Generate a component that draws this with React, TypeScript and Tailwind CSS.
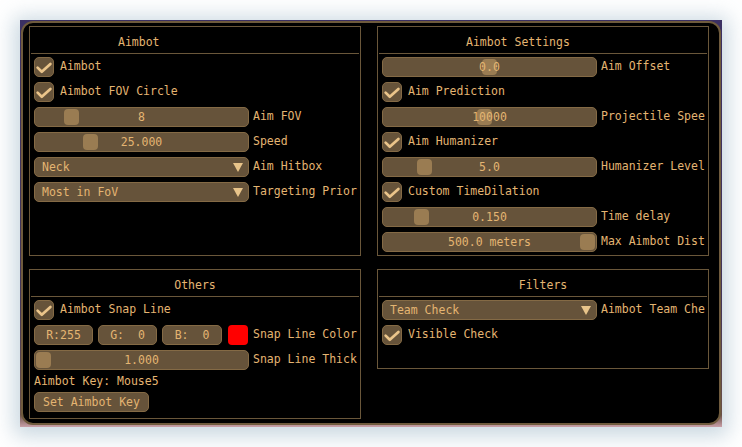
import React from "react";

const FRAME =
  "h-[20px] rounded-[5px] bg-[#66533a] border border-[#846a45] box-border";

function Checkbox({ label }: { label: string }) {
  return (
    <div className="flex items-center gap-[6px] h-[20px] whitespace-nowrap">
      <div className={`w-[20px] shrink-0 ${FRAME} flex items-center justify-center`}>
        <svg width="18" height="18" viewBox="1 1 18 18">
          <path
            d="M3.6 10.6 L7.8 14.8 L16.4 7"
            fill="none"
            stroke="#eac48a"
            strokeWidth="2.7"
            strokeLinecap="round"
            strokeLinejoin="round"
          />
        </svg>
      </div>
      <span>{label}</span>
    </div>
  );
}

function Slider({ value, label, grab }: { value: string; label: string; grab: number }) {
  return (
    <div className="flex items-center gap-[4px] h-[20px] whitespace-nowrap">
      <div className={`relative w-[215px] shrink-0 ${FRAME}`}>
        <div
          className="absolute top-[1px] bottom-[1px] w-[15px] rounded-[4px] bg-[#9a7c52]"
          style={{ left: grab }}
        />
        <div className="relative text-center leading-[18px] whitespace-pre">{value}</div>
      </div>
      <span>{label}</span>
    </div>
  );
}

function Combo({ value, label }: { value: string; label: string }) {
  return (
    <div className="flex items-center gap-[4px] h-[20px] whitespace-nowrap">
      <div className={`relative w-[215px] shrink-0 ${FRAME} flex items-center pl-[7px] pr-[5px]`}>
        <span className="flex-1 leading-[18px]">{value}</span>
        <svg width="10" height="9" viewBox="0 0 10 9">
          <polygon points="0,0 10,0 5,9" fill="#e8c48a" />
        </svg>
      </div>
      <span>{label}</span>
    </div>
  );
}

function Panel({
  title,
  className,
  titleClass,
  children,
}: {
  title: string;
  className: string;
  titleClass: string;
  children: React.ReactNode;
}) {
  return (
    <div className={`border border-[#6a573a] flex flex-col box-border ${className}`}>
      <div className={`h-[26px] pt-[9px] leading-[13px] shrink-0 whitespace-nowrap ${titleClass}`}>{title}</div>
      <div className="mx-[1px] h-px bg-[#6a573a] shrink-0" />
      <div className="pl-[4px] pr-[2px] pt-[3px] flex flex-col gap-[5px] overflow-hidden">
        {children}
      </div>
    </div>
  );
}

export default function App() {
  return (
    <div className="w-[742px] h-[447px] bg-white overflow-hidden pl-[20px] pt-[20px] font-['DejaVu_Sans_Mono',monospace] text-[11.5px] text-[#e4b572]">
      <div className="w-[702px] h-[407px] bg-[linear-gradient(180deg,#3b3063_0%,#433559_70%,#6a5048_97%,#c9a0a8_100%)] shadow-[0_3px_20px_6px_rgba(100,140,165,0.35)] pl-[1px] pt-[1px]">
        <div className="w-[700px] h-[404px] rounded-[12px] border-2 border-[#6f5b3d] bg-black box-border pl-[6px] pt-[3px]">
          <div className="grid grid-cols-[332px_332px] grid-rows-[230px_auto] gap-x-[16px] gap-y-[13px] items-start">
            <Panel title="Aimbot" className="h-[230px]" titleClass="pl-[88px] text-left">
              <Checkbox label="Aimbot" />
              <Checkbox label="Aimbot FOV Circle" />
              <Slider value="8" label="Aim FOV" grab={29} />
              <Slider value="25.000" label="Speed" grab={48} />
              <Combo value="Neck" label="Aim Hitbox" />
              <Combo value="Most in FoV" label="Targeting Prior" />
            </Panel>
            <Panel title="Aimbot Settings" className="h-[230px]" titleClass="pl-[88px] text-left">
              <Slider value="0.0" label="Aim Offset" grab={99} />
              <Checkbox label="Aim Prediction" />
              <Slider value="10000" label="Projectile Spee" grab={94} />
              <Checkbox label="Aim Humanizer" />
              <Slider value="5.0" label="Humanizer Level" grab={34} />
              <Checkbox label="Custom TimeDilation" />
              <Slider value="0.150" label="Time delay" grab={31} />
              <Slider value="500.0 meters" label="Max Aimbot Dist" grab={197} />
            </Panel>
            <Panel title="Others" className="h-[150px]" titleClass="text-center">
              <Checkbox label="Aimbot Snap Line" />
              <div className="flex items-center h-[20px] gap-[5px] whitespace-nowrap">
                <div className={`w-[59px] shrink-0 ${FRAME} text-center leading-[18px] whitespace-pre`}>R:255</div>
                <div className={`w-[59px] shrink-0 ${FRAME} text-center leading-[18px] whitespace-pre`}>G:  0</div>
                <div className={`w-[60px] shrink-0 ${FRAME} text-center leading-[18px] whitespace-pre`}>B:  0</div>
                <div className="ml-[1px] w-[20px] h-[20px] shrink-0 rounded-[4px] bg-[#ff0000]" />
                <span>Snap Line Color</span>
              </div>
              <Slider value="1.000" label="Snap Line Thick" grab={1} />
              <div className="leading-[12px] h-[12px] whitespace-nowrap">Aimbot Key: Mouse5</div>
              <div className="flex">
                <div className={`${FRAME} px-[8px] leading-[18px] whitespace-nowrap`}>Set Aimbot Key</div>
              </div>
            </Panel>
            <Panel title="Filters" className="h-[100px]" titleClass="text-center">
              <Combo value="Team Check" label="Aimbot Team Che" />
              <Checkbox label="Visible Check" />
            </Panel>
          </div>
        </div>
      </div>
    </div>
  );
}
